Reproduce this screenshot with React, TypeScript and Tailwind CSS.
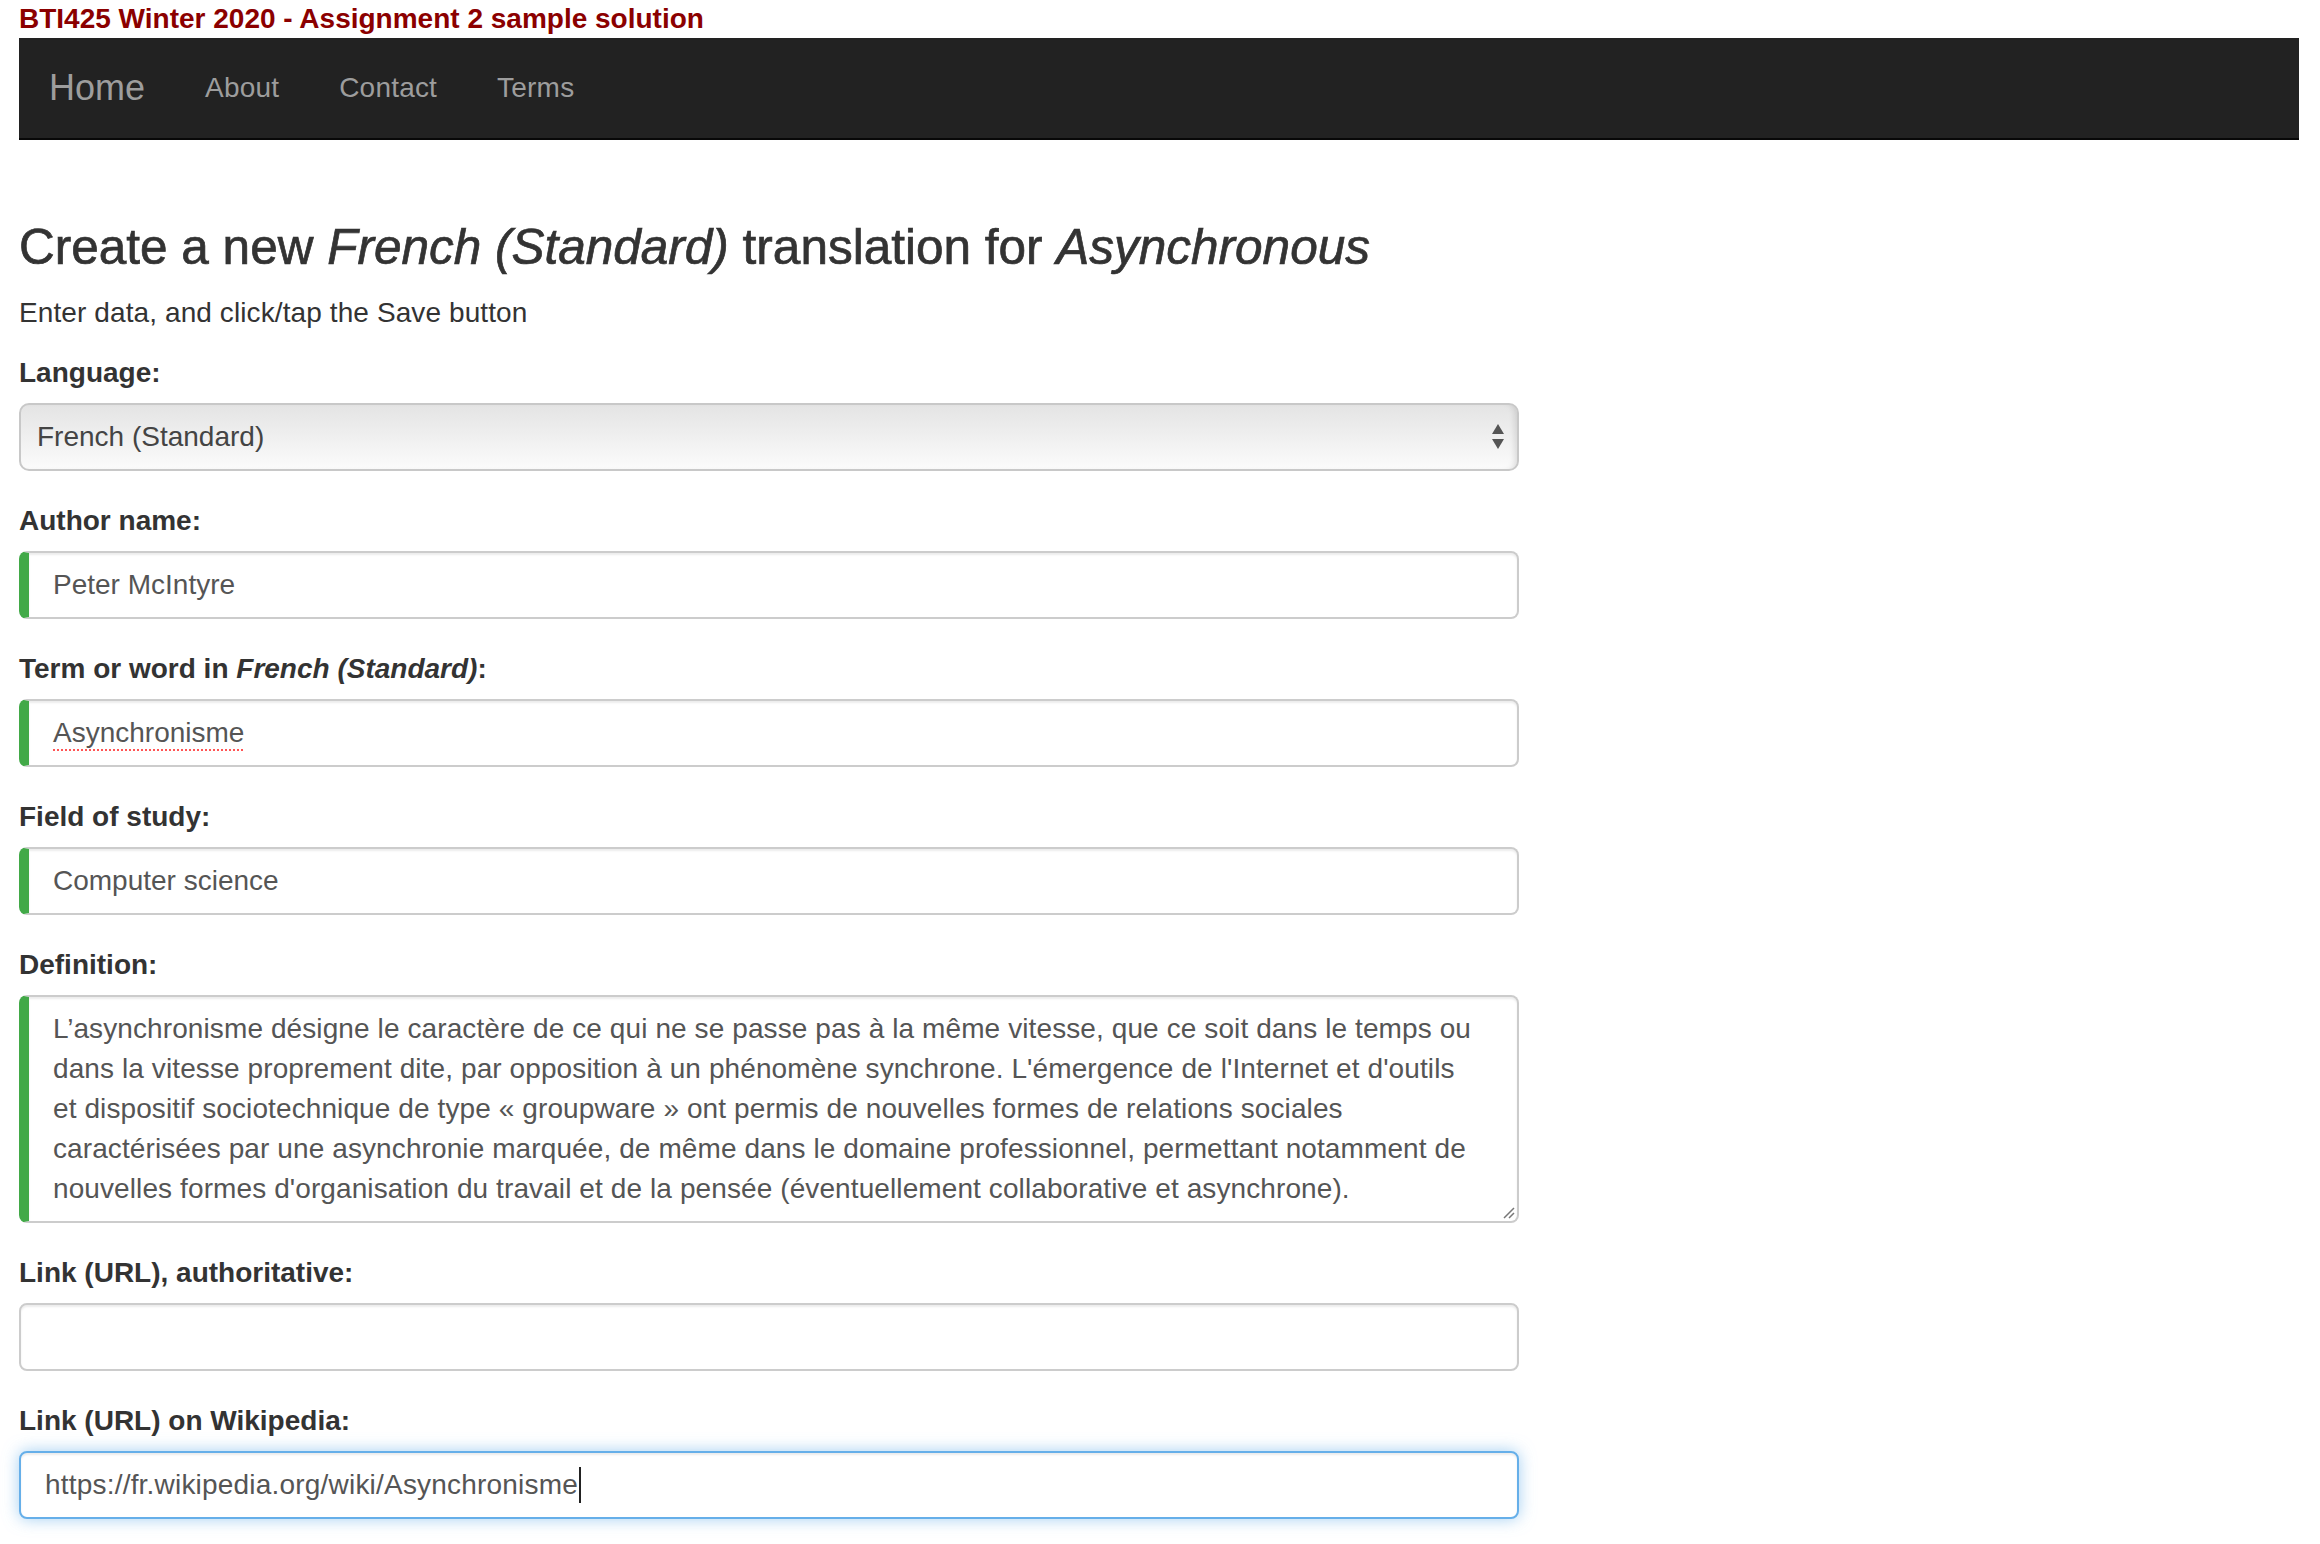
const definitionLines = [
  "L’asynchronisme désigne le caractère de ce qui ne se passe pas à la même vitesse, que ce soit dans le temps ou",
  "dans la vitesse proprement dite, par opposition à un phénomène synchrone. L'émergence de l'Internet et d'outils",
  "et dispositif sociotechnique de type « groupware » ont permis de nouvelles formes de relations sociales",
  "caractérisées par une asynchronie marquée, de même dans le domaine professionnel, permettant notamment de",
  "nouvelles formes d'organisation du travail et de la pensée (éventuellement collaborative et asynchrone).",
];

const Label = ({ children }: { children: React.ReactNode }) => (
  <label className="mb-[10px] block text-[28px] font-bold leading-[40px] text-[#333]">
    {children}
  </label>
);

const Field = ({
  value,
  valid,
  children,
}: {
  value?: string;
  valid?: boolean;
  children?: React.ReactNode;
}) => (
  <div
    className={
      "flex h-[68px] items-center rounded-[8px] border-2 border-[#ccc] bg-white px-[24px] text-[28px] text-[#555] shadow-[inset_0_2px_2px_rgba(0,0,0,0.075)] " +
      (valid ? "border-l-[10px] border-l-[#42A948]" : "")
    }
  >
    {children ?? value}
  </div>
);

export default function App() {
  return (
    <div className="min-h-screen bg-white pl-[19px] pr-[21px] font-['Liberation_Sans',Arial,sans-serif] text-[#333]">
      {/* page title */}
      <div className="h-[38px] text-[28px] font-bold leading-[38px] text-[#8b0000]">
        BTI425 Winter 2020 - Assignment 2 sample solution
      </div>

      {/* navbar */}
      <nav className="flex h-[102px] items-center border-b-2 border-[#080808] bg-[#222] text-[#9d9d9d]">
        <span className="pl-[30px] pr-[30px] text-[36px]">Home</span>
        <span className="px-[30px] text-[28px] tracking-[0.2px]">About</span>
        <span className="px-[30px] text-[28px] tracking-[0.2px]">Contact</span>
        <span className="px-[30px] text-[28px] tracking-[0.2px]">Terms</span>
      </nav>

      <main className="mt-[80px] w-[1500px]">
        <h3 className="mb-[20px] text-[49.5px] leading-[53px] text-[#333] [-webkit-text-stroke:0.7px_#333]">
          Create a new <em>French (Standard)</em> translation for <em>Asynchronous</em>
        </h3>
        <p className="mb-[20px] text-[28px] leading-[40px] tracking-[0.1px]">Enter data, and click/tap the Save button</p>

        {/* language */}
        <div className="mb-[30px]">
          <Label>Language:</Label>
          <div className="flex h-[68px] items-center justify-between rounded-[10px] border-2 border-[#c8c8c8] bg-gradient-to-b from-[#e4e4e4] to-[#fbfbfb] pl-[16px] pr-[12px] text-[28px] text-[#444] shadow-[inset_-6px_0_6px_-4px_rgba(0,0,0,0.12)]">
            <span>French (Standard)</span>
            <svg width="14" height="26" viewBox="0 0 14 26">
              <path d="M7 0 L13 10 L1 10 Z" fill="#555" />
              <path d="M1 15 L13 15 L7 25 Z" fill="#555" />
            </svg>
          </div>
        </div>

        <div className="mb-[30px]">
          <Label>Author name:</Label>
          <Field valid value="Peter McIntyre" />
        </div>

        <div className="mb-[30px]">
          <Label>
            Term or word in <em>French (Standard)</em>:
          </Label>
          <Field valid>
            <span className="underline decoration-[#f55] decoration-dotted decoration-2 underline-offset-[7px]">
              Asynchronisme
            </span>
          </Field>
        </div>

        <div className="mb-[30px]">
          <Label>Field of study:</Label>
          <Field valid value="Computer science" />
        </div>

        {/* definition */}
        <div className="mb-[30px]">
          <Label>Definition:</Label>
          <div className="relative rounded-[8px] border-2 border-l-[10px] border-[#ccc] border-l-[#42A948] bg-white px-[24px] py-[12px] text-[28px] leading-[40px] tracking-[0.1px] text-[#555] shadow-[inset_0_2px_2px_rgba(0,0,0,0.075)]">
            {definitionLines.map((line) => (
              <div key={line} className="whitespace-nowrap">
                {line}
              </div>
            ))}
            <svg className="absolute bottom-[2px] right-[2px]" width="14" height="14" viewBox="0 0 14 14">
              <path d="M13 3 L3 13 M13 8 L8 13" stroke="#777" strokeWidth="1.5" />
            </svg>
          </div>
        </div>

        <div className="mb-[30px]">
          <Label>Link (URL), authoritative:</Label>
          <Field value="" />
        </div>

        <div className="mb-[30px]">
          <Label>Link (URL) on Wikipedia:</Label>
          <div className="flex h-[68px] items-center rounded-[8px] border-2 border-[#66afe9] bg-white px-[24px] text-[28px] tracking-[0.2px] text-[#555] shadow-[inset_0_2px_2px_rgba(0,0,0,0.075),0_0_16px_rgba(102,175,233,0.6)]">
            https://fr.wikipedia.org/wiki/Asynchronisme
            <span className="ml-[1px] inline-block h-[36px] w-[2px] bg-[#222]" />
          </div>
        </div>
      </main>
    </div>
  );
}
